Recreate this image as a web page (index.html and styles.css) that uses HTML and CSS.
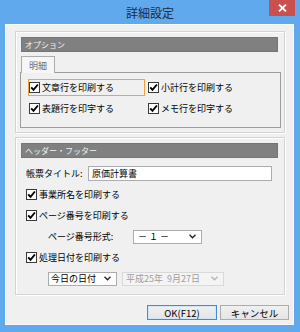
FILE: index.html
```html
<!DOCTYPE html>
<html lang="ja">
<head>
<meta charset="utf-8">
<title>詳細設定</title>
<link rel="stylesheet" href="styles.css">
</head>
<body>
<div class="window">
  <div class="titlebar">詳細設定</div>
  <div class="close"><svg width="9" height="8" viewBox="0 0 9 8"><path d="M1 0.5 L8 7.5 M8 0.5 L1 7.5" stroke="#fff" stroke-width="1.8"/></svg></div>
  <div class="client">
    <div class="group group1">
      <div class="header">オプション</div>
      <div class="tab">明細</div>
      <div class="panel">
        <div class="cbl focus"><span class="cb"><svg width="9" height="9" viewBox="0 0 9 9"><path d="M1.2 4.4 L3.5 6.9 L7.9 1.5" fill="none" stroke="#000" stroke-width="1.9"/></svg></span><span class="txt">文章行を印刷する</span></div>
        <div class="cbl"><span class="cb"><svg width="9" height="9" viewBox="0 0 9 9"><path d="M1.2 4.4 L3.5 6.9 L7.9 1.5" fill="none" stroke="#000" stroke-width="1.9"/></svg></span><span>小計行を印刷する</span></div>
        <div class="cbl"><span class="cb"><svg width="9" height="9" viewBox="0 0 9 9"><path d="M1.2 4.4 L3.5 6.9 L7.9 1.5" fill="none" stroke="#000" stroke-width="1.9"/></svg></span><span>表題行を印字する</span></div>
        <div class="cbl"><span class="cb"><svg width="9" height="9" viewBox="0 0 9 9"><path d="M1.2 4.4 L3.5 6.9 L7.9 1.5" fill="none" stroke="#000" stroke-width="1.9"/></svg></span><span>メモ行を印字する</span></div>
      </div>
    </div>
    <div class="group group2">
      <div class="header">ヘッダー・フッター</div>
      <div class="row row-title">
        <span class="lbl lbl-title">帳票タイトル:</span>
        <div class="input">原価計算書</div>
      </div>
      <div class="row row-cb">
        <span class="cb"><svg width="9" height="9" viewBox="0 0 9 9"><path d="M1.2 4.4 L3.5 6.9 L7.9 1.5" fill="none" stroke="#000" stroke-width="1.9"/></svg></span><span>事業所名を印刷する</span>
      </div>
      <div class="row row-cb">
        <span class="cb"><svg width="9" height="9" viewBox="0 0 9 9"><path d="M1.2 4.4 L3.5 6.9 L7.9 1.5" fill="none" stroke="#000" stroke-width="1.9"/></svg></span><span>ページ番号を印刷する</span>
      </div>
      <div class="row row-indent">
        <span class="lbl lbl-page">ページ番号形式:</span>
        <div class="select sel-page"><span class="val">－&nbsp;１&nbsp;－</span><svg class="chev" width="7" height="5" viewBox="0 0 7 5"><path d="M0.5 0.8 L3.5 3.8 L6.5 0.8" fill="none" stroke="#222" stroke-width="1.3"/></svg></div>
      </div>
      <div class="row row-cb">
        <span class="cb"><svg width="9" height="9" viewBox="0 0 9 9"><path d="M1.2 4.4 L3.5 6.9 L7.9 1.5" fill="none" stroke="#000" stroke-width="1.9"/></svg></span><span>処理日付を印刷する</span>
      </div>
      <div class="row row-indent row-date">
        <div class="select sel-day"><span class="val">今日の日付</span><svg class="chev" width="7" height="5" viewBox="0 0 7 5"><path d="M0.5 0.8 L3.5 3.8 L6.5 0.8" fill="none" stroke="#222" stroke-width="1.3"/></svg></div>
        <div class="select sel-date disabled"><span class="val">平成25年&nbsp;&nbsp;9月27日</span><svg class="chev" width="7" height="5" viewBox="0 0 7 5"><path d="M0.5 0.8 L3.5 3.8 L6.5 0.8" fill="none" stroke="#b4b4b4" stroke-width="1.3"/></svg></div>
      </div>
    </div>
    <div class="buttons">
      <div class="btn btn-ok">OK(F12)</div>
      <div class="btn">キャンセル</div>
    </div>
  </div>
</div>
</body>
</html>
```
FILE: styles.css
```css
* { box-sizing: border-box; margin: 0; padding: 0; }
body {
  width: 300px;
  height: 332px;
  overflow: hidden;
  background: #5fa9ec;
  font-family: "Noto Sans CJK JP", "Noto Sans", sans-serif;
  font-size: 9px;
  color: #000;
}
.window {
  position: relative;
  width: 300px;
  height: 332px;
  display: flex;
  flex-direction: column;
}
.titlebar {
  height: 24px;
  display: flex;
  align-items: center;
  justify-content: center;
  font-size: 12px;
  color: #1c2c3e;
  padding-top: 1px;
}
.close {
  position: absolute;
  top: 0;
  right: 5px;
  width: 26px;
  height: 16px;
  background: #c9504c;
  display: flex;
  align-items: center;
  justify-content: center;
}
.client {
  margin: 0 6px 0 5px;
  height: 301px;
  background: #f0f0f0;
  border: 1px solid #f7f9fb;
  padding: 6px 4px 4px 9px;
  display: flex;
  flex-direction: column;
}
.group {
  margin-right: 4px;
  border: 1px solid #d4d4d4;
  box-shadow: inset 1px 1px 0 #fff, 1px 1px 0 #fff;
  padding: 5px 3px 4px 4px;
  display: flex;
  flex-direction: column;
}
.group1 { height: 102px; }
.group2 { height: 158px; margin-top: 4px; padding-bottom: 5px; }
.header {
  height: 15px;
  flex: none;
  margin: 0 3px 0 1px;
  background: #808080;
  border: 1px solid #757575;
  color: #f2f2f2;
  font-size: 8px;
  padding-left: 3px;
  display: flex;
  align-items: center;
}
.tab {
  margin: 4px 0 -1px 1px;
  width: 34px;
  height: 17px;
  flex: none;
  border: 1px solid #acacac;
  border-bottom: none;
  background: #f6f6f6;
  position: relative;
  z-index: 1;
  color: #707070;
  display: flex;
  align-items: center;
  justify-content: center;
}
.panel {
  height: 56px;
  flex: none;
  border: 1px solid #9c9c9c;
  padding: 6px 0 0 7px;
  display: grid;
  grid-template-columns: 119px 119px;
  grid-auto-rows: 17px;
  row-gap: 4px;
  align-content: start;
}
.cbl {
  display: flex;
  align-items: center;
  gap: 2px;
  height: 17px;
  border: 1px solid transparent;
  white-space: nowrap;
}
.cbl.focus {
  width: 117px;
  border-color: #f3a33d;
}
.cb {
  width: 11px;
  height: 11px;
  flex: none;
  border: 1px solid #3a3a3a;
  background: #fff;
  display: flex;
  align-items: center;
  justify-content: center;
}
.row {
  height: 21px;
  flex: none;
  display: flex;
  align-items: center;
  white-space: nowrap;
}
.row-title { margin-top: 5px; padding-left: 6px; }
.row-cb { padding-left: 6px; gap: 2px; }
.row-indent { padding-left: 28px; }
.lbl-title { width: 62px; }
.lbl-page { width: 85px; }
.input {
  width: 184px;
  height: 15px;
  border: 1px solid #abadb3;
  background: #fff;
  padding-left: 3px;
  display: flex;
  align-items: center;
}
.select {
  height: 14px;
  border: 1px solid #acacac;
  background: #fff;
  display: flex;
  align-items: center;
  justify-content: space-between;
  padding: 0 5px 0 4px;
}
.sel-page { width: 69px; }
.sel-day { width: 69px; padding-left: 2px; }
.row-date { gap: 5px; }
.sel-date { width: 102px; padding-left: 3px; }
.select.disabled {
  background: #f4f4f4;
  border-color: #d9d9d9;
  color: #9d9d9d;
}
.chev { flex: none; }
.buttons {
  margin-top: 10px;
  display: flex;
  justify-content: flex-end;
  gap: 3px;
}
.btn {
  width: 69px;
  height: 15px;
  border: 1px solid #acacac;
  background: linear-gradient(#f0f0f0, #e5e5e5);
  display: flex;
  align-items: center;
  justify-content: center;
  font-size: 9.5px;
}
.btn-ok {
  width: 70px;
  border-color: #3c8de0;
  box-shadow: inset 0 0 0 1px #cfe6fb;
}
```
